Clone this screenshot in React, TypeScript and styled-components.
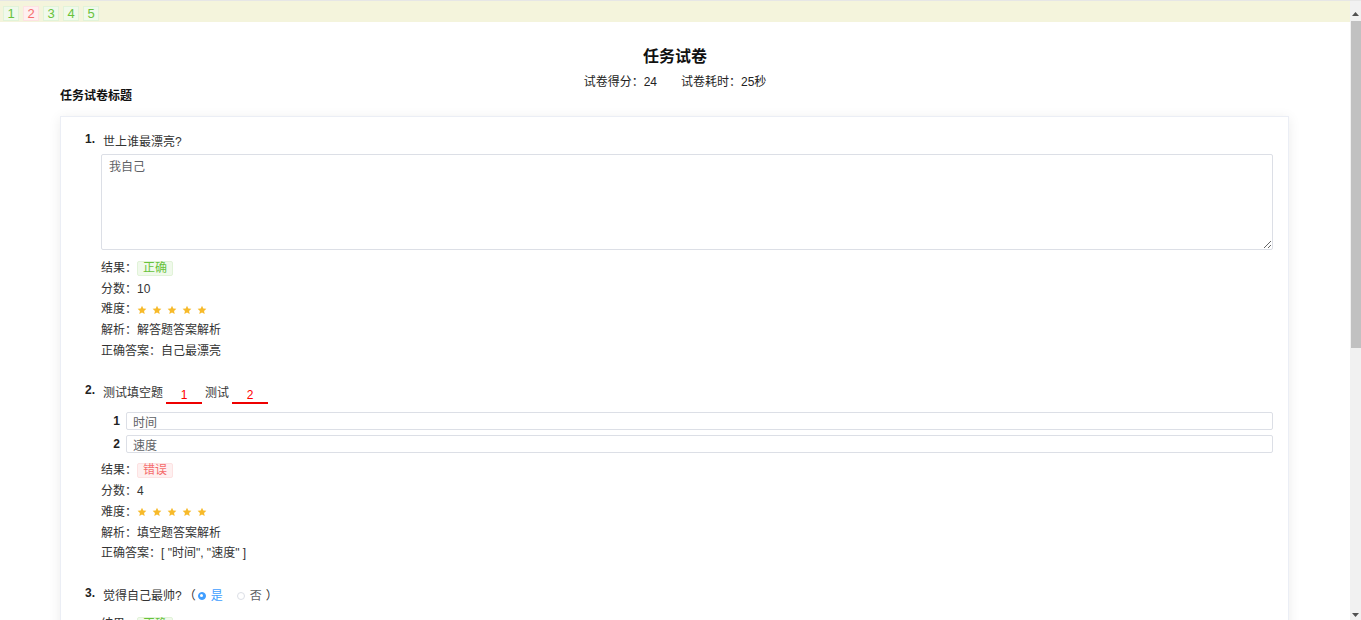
import React from "react";
import styled, { createGlobalStyle, css } from "styled-components";

const Global = createGlobalStyle`
  html, body { margin: 0; padding: 0; background: #fff; height: 100%; overflow: hidden; }
  #root { height: 100%; }
  body {
    font-family: "Liberation Sans", "Noto Sans CJK SC", sans-serif;
    font-size: 12px;
    color: #333;
  }
`;

type Tone = "ok" | "bad";

const toneCss = (t: Tone) =>
  t === "ok"
    ? css`
        background: #f0f9eb;
        border-color: #e1f3d8;
        color: #67c23a;
      `
    : css`
        background: #fef0f0;
        border-color: #fde2e2;
        color: #f56c6c;
      `;

const Shell = styled.div`
  display: flex;
  height: 100%;
  overflow: hidden;
`;

const Main = styled.div`
  flex: 1;
  min-width: 0;
  overflow: hidden;
`;

const ScrollTrack = styled.div`
  flex: none;
  width: 11px;
  background: #f1f1f1;
  border-top: 1px solid #e6e6e6;
  display: flex;
  flex-direction: column;
`;

const ScrollBtn = styled.div<{ $h: number; $pt: number }>`
  height: ${(p) => p.$h}px;
  padding-top: ${(p) => p.$pt}px;
  box-sizing: border-box;
  display: flex;
  align-items: center;
  justify-content: center;
`;

const Thumb = styled.div`
  height: 327px;
  width: 10px;
  align-self: flex-end;
  background: #c1c1c1;
`;

const TrackFill = styled.div`
  flex: 1;
`;

const TopBar = styled.div`
  height: 22px;
  box-sizing: border-box;
  background: #f4f4dc;
  border-top: 1px solid #e6e6e6;
  display: flex;
  align-items: flex-start;
  gap: 4px;
  padding: 5px 3px 0;
`;

const NavItem = styled.span<{ $tone: Tone }>`
  width: 16px;
  height: 15px;
  box-sizing: border-box;
  border: 1px solid;
  font-size: 13px;
  line-height: 13px;
  text-align: center;
  ${(p) => toneCss(p.$tone)}
`;

const Page = styled.div`
  padding-bottom: 20px;
`;

const Title = styled.h1`
  margin: 24px 0 0;
  text-align: center;
  font-size: 16px;
  line-height: 22px;
  font-weight: bold;
  color: #111;
`;

const Sub = styled.div`
  margin-top: 7px;
  text-align: center;
  line-height: 14px;
  display: flex;
  justify-content: center;
  gap: 24px;
  color: #222;
`;

const PaperLabel = styled.div`
  margin: 0 60px;
  font-weight: bold;
  line-height: 14px;
  color: #111;
`;

const Card = styled.div`
  margin: 13px 61px 0 60px;
  border: 1px solid #ebeef5;
  box-shadow: 0 2px 12px 0 rgba(0, 0, 0, 0.08);
  padding: 15px 15px 30px 24px;
  background: #fff;
`;

const Question = styled.div`
  display: grid;
  grid-template-columns: 16px 1fr;
  margin-bottom: 22px;
  &:last-child {
    margin-bottom: 0;
  }
`;

const Num = styled.div`
  font-weight: bold;
  line-height: 14px;
  color: #222;
`;

const QText = styled.div`
  line-height: 20px;
  height: 20px;
  padding-left: 2px;
  color: #333;
  display: flex;
  align-items: center;
`;

const Area = styled.textarea`
  display: block;
  width: 100%;
  height: 96px;
  box-sizing: border-box;
  margin-top: 2px;
  border: 1px solid #dcdfe6;
  border-radius: 2px;
  padding: 4px 7px;
  font-family: inherit;
  font-size: 12px;
  line-height: 17px;
  color: #606266;
  outline: none;
`;

const Blank = styled.span`
  display: inline-block;
  width: 36px;
  margin: 0 3px -1px;
  align-self: flex-end;
  text-align: center;
  color: #f00;
  line-height: 14px;
  border-bottom: 2px solid #e00;
`;

const Fills = styled.div`
  margin-top: 9px;
  display: flex;
  flex-direction: column;
  gap: 5px;
`;

const FillRow = styled.div`
  display: flex;
  align-items: center;
`;

const FillNo = styled.span`
  width: 25px;
  box-sizing: border-box;
  padding-right: 6px;
  text-align: right;
  font-weight: bold;
  color: #222;
`;

const FillInput = styled.input`
  flex: 1;
  height: 18px;
  box-sizing: border-box;
  border: 1px solid #dcdfe6;
  border-radius: 2px;
  padding: 0 6px;
  font-family: inherit;
  font-size: 12px;
  color: #606266;
  outline: none;
`;

const Results = styled.div<{ $top: number }>`
  margin-top: ${(p) => p.$top}px;
`;

const Line = styled.div`
  line-height: 20.7px;
  height: 20.7px;
  display: flex;
  align-items: center;
  color: #333;
`;

const Tag = styled.span<{ $tone: Tone }>`
  display: inline-block;
  height: 15px;
  line-height: 13px;
  box-sizing: border-box;
  padding: 0 5px;
  border: 1px solid;
  border-radius: 2px;
  font-size: 12px;
  ${(p) => toneCss(p.$tone)}
`;

const Stars = styled.span`
  display: inline-flex;
  gap: 5px;
  align-items: center;
`;

const Paren = styled.span`
  margin: 0 2px;
`;

const Option = styled.span<{ $on?: boolean; $last?: boolean }>`
  display: inline-flex;
  align-items: center;
  gap: 5px;
  margin-right: ${(p) => (p.$last ? 2 : 14)}px;
  color: ${(p) => (p.$on ? "#409eff" : "#606266")};
`;

const RadioDot = styled.span<{ $on?: boolean }>`
  width: 8px;
  height: 8px;
  box-sizing: border-box;
  border-radius: 50%;
  border: 1px solid ${(p) => (p.$on ? "#409eff" : "#dcdfe6")};
  background: ${(p) => (p.$on ? "#409eff" : "#fff")};
  display: inline-flex;
  align-items: center;
  justify-content: center;
  &::after {
    content: "";
    width: 3px;
    height: 3px;
    border-radius: 50%;
    background: #fff;
  }
`;

const CheckBox = styled.span<{ $on?: boolean }>`
  width: 9px;
  height: 9px;
  box-sizing: border-box;
  border-radius: 1px;
  border: 1px solid ${(p) => (p.$on ? "#409eff" : "#dcdfe6")};
  background: ${(p) => (p.$on ? "#409eff" : "#fff")};
`;

const Arrow = ({ up }: { up?: boolean }) => (
  <svg width="7" height="4" viewBox="0 0 7 4">
    <path fill="#505050" d={up ? "M3.5 0L7 4H0z" : "M0 0h7L3.5 4z"} />
  </svg>
);

const Star = () => (
  <svg width="10" height="10" viewBox="0 0 24 24">
    <path
      fill="#f7ba2a"
      d="M12 1.5l3.1 6.9 7.4.8-5.6 5 1.6 7.3L12 17.8l-6.5 3.7 1.6-7.3-5.6-5 7.4-.8z"
    />
  </svg>
);

const FiveStars = () => (
  <Stars>
    {[0, 1, 2, 3, 4].map((i) => (
      <Star key={i} />
    ))}
  </Stars>
);

type Res = { ok: boolean; score: number; analysis: string; answer: string };

const ResultBlock = ({ r, top }: { r: Res; top: number }) => (
  <Results $top={top}>
    <Line>
      结果：<Tag $tone={r.ok ? "ok" : "bad"}>{r.ok ? "正确" : "错误"}</Tag>
    </Line>
    <Line>分数：{r.score}</Line>
    <Line>
      难度：<FiveStars />
    </Line>
    <Line>解析：{r.analysis}</Line>
    <Line>正确答案：{r.answer}</Line>
  </Results>
);

export default function App() {
  return (
    <>
      <Global />
      <Shell>
        <Main>
          <TopBar>
            <NavItem $tone="ok">1</NavItem>
            <NavItem $tone="bad">2</NavItem>
            <NavItem $tone="ok">3</NavItem>
            <NavItem $tone="ok">4</NavItem>
            <NavItem $tone="ok">5</NavItem>
          </TopBar>
          <Page>
            <Title>任务试卷</Title>
            <Sub>
              <span>试卷得分：24</span>
              <span>试卷耗时：25秒</span>
            </Sub>
            <PaperLabel>任务试卷标题</PaperLabel>
            <Card>
              <Question>
                <Num>1.</Num>
                <div>
                  <QText>世上谁最漂亮?</QText>
                  <Area readOnly defaultValue="我自己" />
                  <ResultBlock
                    top={8}
                    r={{ ok: true, score: 10, analysis: "解答题答案解析", answer: "自己最漂亮" }}
                  />
                </div>
              </Question>
              <Question>
                <Num>2.</Num>
                <div>
                  <QText>
                    测试填空题<Blank>1</Blank>测试<Blank>2</Blank>
                  </QText>
                  <Fills>
                    <FillRow>
                      <FillNo>1</FillNo>
                      <FillInput readOnly value="时间" />
                    </FillRow>
                    <FillRow>
                      <FillNo>2</FillNo>
                      <FillInput readOnly value="速度" />
                    </FillRow>
                  </Fills>
                  <ResultBlock
                    top={7}
                    r={{ ok: false, score: 4, analysis: "填空题答案解析", answer: '[ "时间", "速度" ]' }}
                  />
                </div>
              </Question>
              <Question>
                <Num>3.</Num>
                <div>
                  <QText>
                    觉得自己最帅?
                    <Paren>（</Paren>
                    <Option $on>
                      <RadioDot $on />是
                    </Option>
                    <Option $last>
                      <RadioDot />否
                    </Option>
                    <Paren>）</Paren>
                  </QText>
                  <ResultBlock
                    top={8}
                    r={{ ok: true, score: 5, analysis: "判断题答案解析", answer: "是" }}
                  />
                </div>
              </Question>
              <Question>
                <Num>4.</Num>
                <div>
                  <QText>
                    以下哪些是水果?
                    <Paren>（</Paren>
                    <Option $on>
                      <CheckBox $on />苹果
                    </Option>
                    <Option $on>
                      <CheckBox $on />香蕉
                    </Option>
                    <Option $last>
                      <CheckBox />白菜
                    </Option>
                    <Paren>）</Paren>
                  </QText>
                  <ResultBlock
                    top={8}
                    r={{ ok: true, score: 3, analysis: "多选题答案解析", answer: '[ "苹果", "香蕉" ]' }}
                  />
                </div>
              </Question>
              <Question>
                <Num>5.</Num>
                <div>
                  <QText>
                    一年有几个季节?
                    <Paren>（</Paren>
                    <Option>
                      <RadioDot />三个
                    </Option>
                    <Option $on $last>
                      <RadioDot $on />四个
                    </Option>
                    <Paren>）</Paren>
                  </QText>
                  <ResultBlock
                    top={8}
                    r={{ ok: true, score: 2, analysis: "单选题答案解析", answer: "四个" }}
                  />
                </div>
              </Question>
            </Card>
          </Page>
        </Main>
        <ScrollTrack>
          <ScrollBtn $h={20} $pt={5}>
            <Arrow up />
          </ScrollBtn>
          <Thumb />
          <TrackFill />
          <ScrollBtn $h={12} $pt={2}>
            <Arrow />
          </ScrollBtn>
        </ScrollTrack>
      </Shell>
    </>
  );
}
